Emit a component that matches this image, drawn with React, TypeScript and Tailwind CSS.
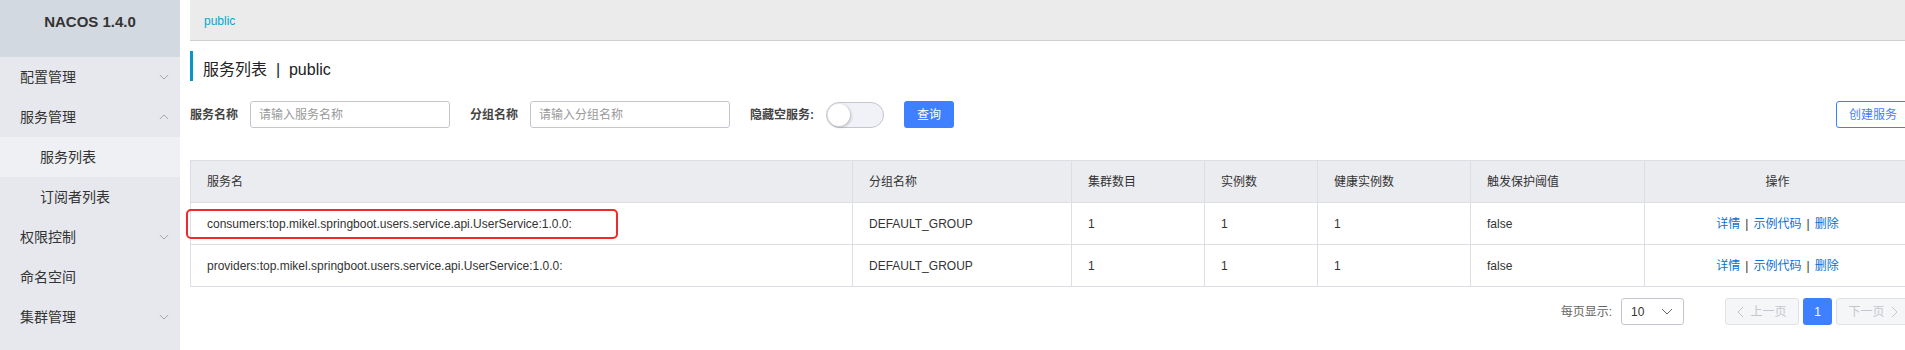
import React from 'react';

const FONT = "font-['Liberation_Sans','Noto_Sans_CJK_SC',sans-serif]";

function Chevron({ up = false, className = '' }: { up?: boolean; className?: string }) {
  return (
    <svg viewBox="0 0 12 7" className={className} fill="none" stroke="currentColor" strokeWidth="1">
      {up ? <polyline points="1,6 6,1 11,6" /> : <polyline points="1,1 6,6 11,1" />}
    </svg>
  );
}

function ArrowSide({ left = false }: { left?: boolean }) {
  return (
    <svg viewBox="0 0 7 12" className="w-[7px] h-[12px]" fill="none" stroke="currentColor" strokeWidth="1">
      {left ? <polyline points="6,1 1,6 6,11" /> : <polyline points="1,1 6,6 1,11" />}
    </svg>
  );
}

// 侧边栏菜单
const menu = [
  { label: '配置管理', arrow: 'down' },
  { label: '服务管理', arrow: 'up' },
  { label: '服务列表', sub: true, active: true },
  { label: '订阅者列表', sub: true },
  { label: '权限控制', arrow: 'down' },
  { label: '命名空间' },
  { label: '集群管理', arrow: 'down' },
];

const columns = [
  { title: '服务名', w: 'w-[662px]' },
  { title: '分组名称', w: 'w-[219px]' },
  { title: '集群数目', w: 'w-[133px]' },
  { title: '实例数', w: 'w-[113px]' },
  { title: '健康实例数', w: 'w-[153px]' },
  { title: '触发保护阈值', w: 'w-[174px]' },
  { title: '操作', w: 'w-[266px]', center: true },
];

const rows = [
  { name: 'consumers:top.mikel.springboot.users.service.api.UserService:1.0.0:', marked: true },
  { name: 'providers:top.mikel.springboot.users.service.api.UserService:1.0.0:' },
];

export default function App() {
  return (
    <div className={`${FONT} flex w-[1905px] h-[350px] overflow-hidden bg-white text-[#333]`}>
      {/* 侧边栏 */}
      <aside className="w-[180px] shrink-0 bg-[#e6e8ed]">
        <div className="h-[57px] bg-[#d3d9e1] pt-[13px] text-center text-[15px] leading-[18px] font-bold text-[#333]">
          NACOS 1.4.0
        </div>
        {menu.map((m) => (
          <div
            key={m.label}
            className={`flex h-[40px] items-center justify-between pr-[11px] text-[14px] ${
              m.sub ? 'pl-[40px]' : 'pl-[20px]'
            } ${m.active ? 'bg-[#eef0f4]' : ''}`}
          >
            <span>{m.label}</span>
            {m.arrow && <Chevron up={m.arrow === 'up'} className="w-[10px] h-[6px] text-[#999]" />}
          </div>
        ))}
      </aside>

      {/* 主体 */}
      <main className="w-[1730px] shrink-0 pl-[10px]">
        <div className="h-[41px] bg-[#ebebeb] border-b border-[#cfcfcf] pl-[14px] pt-[2px] flex items-center text-[12px] text-[#00a8d0]">
          public
        </div>

        <div className="mt-[10px] h-[30px] border-l-[3px] border-[#0a95c8] pl-[10px] pt-[8px] flex items-center text-[16px] text-[#222]">
          服务列表&nbsp;&nbsp;|&nbsp;&nbsp;public
        </div>

        {/* 查询条件 */}
        <div className="mt-[20px] flex items-center justify-between h-[27px] text-[12px]">
          <div className="flex items-center">
            <span className="font-bold text-[#444] mr-[12px]">服务名称</span>
            <div className="w-[200px] h-[27px] border border-[#c4c6cf] rounded-[3px] px-[8px] flex items-center text-[#999]">
              请输入服务名称
            </div>
            <span className="font-bold text-[#444] ml-[20px] mr-[12px]">分组名称</span>
            <div className="w-[200px] h-[27px] border border-[#c4c6cf] rounded-[3px] px-[8px] flex items-center text-[#999]">
              请输入分组名称
            </div>
            <span className="font-bold text-[#444] ml-[20px] mr-[12px]">隐藏空服务:</span>
            <div className="w-[58px] h-[26px] rounded-full border border-[#c4c6cf] bg-[#f1f2f7] p-[1px]">
              <div className="w-[22px] h-[22px] rounded-full bg-white shadow-[1px_1px_3px_rgba(0,0,0,0.25)]" />
            </div>
            <button className="ml-[20px] w-[50px] h-[27px] rounded-[3px] bg-[#3e80ff] text-white text-[12px]">
              查询
            </button>
          </div>
          <button className="w-[74px] h-[27px] rounded-[3px] border border-[#3e80ff] text-[#3e80ff] text-[12px] bg-white">
            创建服务
          </button>
        </div>

        {/* 服务表格 */}
        <table className="mt-[32px] table-fixed border-collapse text-[12px] w-[1720px]">
          <colgroup>
            {columns.map((c) => (
              <col key={c.title} className={c.w} />
            ))}
          </colgroup>
          <thead>
            <tr className="h-[42px] bg-[#ebecf0]">
              {columns.map((c) => (
                <th
                  key={c.title}
                  className={`border border-[#dcdee3] px-[16px] font-normal text-[#333] ${c.center ? 'text-center' : 'text-left'}`}
                >
                  {c.title}
                </th>
              ))}
            </tr>
          </thead>
          <tbody>
            {rows.map((r) => (
              <tr key={r.name} className="h-[42px]">
                <td className="relative border border-[#dcdee3] px-[16px]">
                  {r.marked && (
                    <div className="absolute left-[-5px] top-[6px] w-[432px] h-[30px] rounded-[5px] border-2 border-[#f02a2a]" />
                  )}
                  {r.name}
                </td>
                <td className="border border-[#dcdee3] px-[16px]">DEFAULT_GROUP</td>
                <td className="border border-[#dcdee3] px-[16px]">1</td>
                <td className="border border-[#dcdee3] px-[16px]">1</td>
                <td className="border border-[#dcdee3] px-[16px]">1</td>
                <td className="border border-[#dcdee3] px-[16px]">false</td>
                <td className="border border-[#dcdee3] px-[16px] text-center">
                  <span className="text-[#0a6fd6]">详情</span>
                  <span className="mx-[5px] text-[#333]">|</span>
                  <span className="text-[#0a6fd6]">示例代码</span>
                  <span className="mx-[5px] text-[#333]">|</span>
                  <span className="text-[#0a6fd6]">删除</span>
                </td>
              </tr>
            ))}
          </tbody>
        </table>

        {/* 分页 */}
        <div className="mt-[11px] w-[1720px] flex items-center justify-end text-[12px]">
          <span className="text-[#666] mr-[9px]">每页显示:</span>
          <div className="w-[63px] h-[27px] border border-[#c4c6cf] rounded-[3px] flex items-center justify-between pl-[9px] pr-[10px] text-[#333]">
            <span>10</span>
            <Chevron className="w-[12px] h-[7px] text-[#666]" />
          </div>
          <div className="ml-[41px] w-[74px] h-[27px] border border-[#e0e2e8] bg-[#f5f6f8] rounded-[3px] flex items-center justify-center gap-[6px] text-[#c4c6cf]">
            <ArrowSide left />
            <span>上一页</span>
          </div>
          <div className="ml-[4px] w-[29px] h-[27px] rounded-[3px] bg-[#3e80ff] text-white flex items-center justify-center">
            1
          </div>
          <div className="ml-[4px] w-[74px] h-[27px] border border-[#e0e2e8] bg-[#f5f6f8] rounded-[3px] flex items-center justify-center gap-[6px] text-[#c4c6cf]">
            <span>下一页</span>
            <ArrowSide />
          </div>
        </div>
      </main>
    </div>
  );
}
